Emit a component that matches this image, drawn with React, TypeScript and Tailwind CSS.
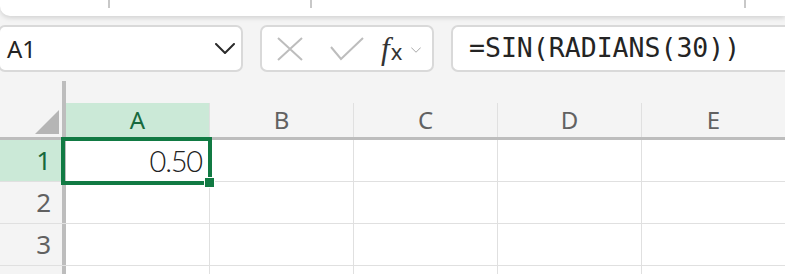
import React from "react";

const COLUMNS = ["A", "B", "C", "D", "E"];
const ROWS = [1, 2, 3, 4];

function ChevronDown({ className }: { className?: string }) {
  return (
    <svg viewBox="0 0 20 11" className={className} fill="none">
      <path d="M1 1l9 9 9-9" stroke="currentColor" strokeWidth="2" strokeLinecap="round" strokeLinejoin="round" />
    </svg>
  );
}

function FormulaBar() {
  return (
    <div className="mt-[9px] flex h-[47px] items-stretch">
      {/* Name box */}
      <div className="-ml-[2px] flex w-[245px] items-center justify-between rounded-[7px] border-2 border-[#d9d9d9] bg-white pl-[7px] pr-[6px]">
        <span className="text-[24px] leading-none text-[#242424]">A1</span>
        <ChevronDown className="h-[11px] w-[20px] text-[#2b2b2b]" />
      </div>

      {/* Cancel / enter / function */}
      <div className="ml-[17px] flex w-[174px] items-center rounded-[7px] border-2 border-[#d9d9d9] bg-white pl-[15px]">
        <svg viewBox="0 0 26 24" className="h-[24px] w-[26px]" fill="none">
          <path d="M1 1l24 22M25 1L1 23" stroke="#bdbdbd" strokeWidth="2" />
        </svg>
        <svg viewBox="0 0 34 24" className="ml-[27px] h-[24px] w-[34px]" fill="none">
          <path d="M1 10l10 12L33 1" stroke="#bdbdbd" strokeWidth="2" />
        </svg>
        <span className="ml-[17px] flex items-baseline text-[#333]">
          <span className="font-['Liberation_Serif',serif] text-[31px] italic leading-none">f</span>
          <span className="ml-[1px] translate-y-[1px] text-[22px] leading-none">x</span>
        </span>
        <ChevronDown className="ml-[9px] mt-[2px] h-[6px] w-[10px] text-[#a8a8a8]" />
      </div>

      {/* Formula input */}
      <div className="ml-[17px] flex flex-1 items-center rounded-l-[7px] border-2 border-r-0 border-[#d9d9d9] bg-white pl-[16px]">
        <span className="font-['DejaVu_Sans_Mono',monospace] text-[26.5px] leading-none text-[#242424]">
          =SIN(RADIANS(30))
        </span>
      </div>
    </div>
  );
}

function Grid() {
  return (
    <div className="relative mt-[9px]">
      {/* Column headers */}
      <div className="flex border-b-[3px] border-[#bdbdbd]">
        <div className="flex h-[56px] w-[66px] shrink-0 items-end justify-end border-r-4 border-[#bdbdbd] pb-[3px] pr-[3px]">
          <svg viewBox="0 0 24 24" className="h-[24px] w-[24px]">
            <path d="M24 0V24H0Z" fill="#b5b5b5" />
          </svg>
        </div>
        {COLUMNS.map((c) => (
          <div key={c} className="mt-[22px] flex h-[34px] w-[144px] shrink-0 items-center justify-center border-r border-[#e0e0e0]">
            <span
              className={
                c === "A"
                  ? "flex h-full w-full items-center justify-center bg-[#cbe9d7] text-[24px] text-[#17693d]"
                  : "text-[24px] text-[#616161]"
              }
            >
              {c}
            </span>
          </div>
        ))}
      </div>

      {/* Rows (row 4 is only partly in view) */}
      {ROWS.map((r) => (
        <div key={r} className="flex h-[42px] border-b border-[#e0e0e0]">
          <div
            className={
              r === 1
                ? "flex w-[66px] shrink-0 items-center justify-end border-r-4 border-[#bdbdbd] bg-[#cbe9d7] pr-[11px] text-[26px] text-[#17693d]"
                : "flex w-[66px] shrink-0 items-center justify-end border-r-4 border-[#bdbdbd] pr-[11px] text-[26px] text-[#616161]"
            }
          >
            {r < 4 ? r : ""}
          </div>
          {COLUMNS.map((c) => (
            <div key={c} className="flex w-[144px] shrink-0 items-center justify-end border-r border-[#e0e0e0] bg-white pr-[7px]">
              {r === 1 && c === "A" && (
                <span className="font-['Lato',sans-serif] text-[29px] font-light leading-none tracking-[-1.2px] text-[#222]">0.50</span>
              )}
            </div>
          ))}
        </div>
      ))}

      {/* Selection */}
      <div className="pointer-events-none absolute left-[61px] top-[56px] h-[48px] w-[151px] border-4 border-[#117a43]" />
      <div className="pointer-events-none absolute left-[204px] top-[96px] h-[11px] w-[11px] border border-white bg-[#117a43]" />
    </div>
  );
}

export default function App() {
  return (
    <div className="h-[274px] w-[785px] overflow-hidden bg-[#f4f4f4] font-['Noto_Sans',sans-serif]">
      {/* Ribbon edge */}
      <div className="flex h-[16px] items-start rounded-bl-[10px] bg-white shadow-[0_2px_5px_rgba(0,0,0,0.14)]">
        <div className="w-[108px] shrink-0" />
        <div className="h-[8px] w-[2px] bg-[#c8c8c8]" />
        <div className="w-[200px] shrink-0" />
        <div className="h-[8px] w-[2px] bg-[#c8c8c8]" />
        <div className="w-[432px] shrink-0" />
        <div className="h-[8px] w-[2px] bg-[#c8c8c8]" />
      </div>
      <FormulaBar />
      <Grid />
    </div>
  );
}
